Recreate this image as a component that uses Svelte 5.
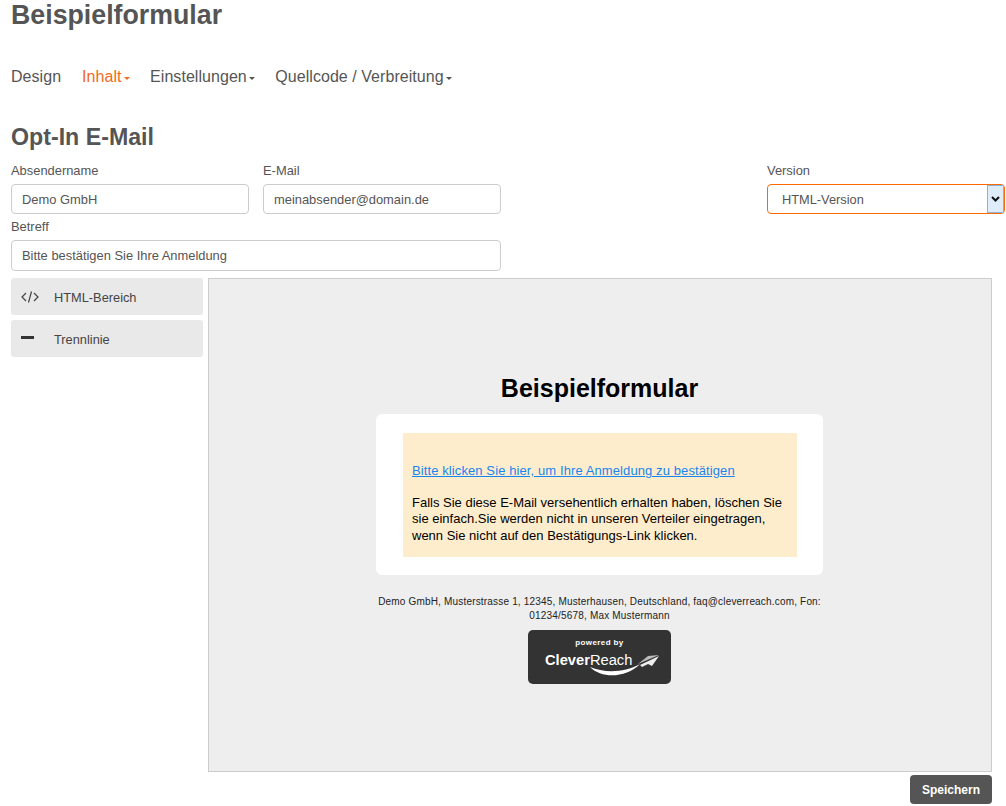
<script>
    const navItems = [
        { label: "Design" },
        { label: "Inhalt", caret: true, active: true },
        { label: "Einstellungen", caret: true },
        { label: "Quellcode / Verbreitung", caret: true }
    ];
</script>

<div class="page">
    <h1>Beispielformular</h1>

    <nav class="nav">
        {#each navItems as item}
            <span class="nav-item" class:active={item.active}>
                {item.label}{#if item.caret}<i class="caret"></i>{/if}
            </span>
        {/each}
    </nav>

    <h2>Opt-In E-Mail</h2>

    <div class="form-row">
        <div class="field">
            <span class="label">Absendername</span>
            <input class="input" value="Demo GmbH" />
        </div>
        <div class="field">
            <span class="label">E-Mail</span>
            <input class="input" value="meinabsender@domain.de" />
        </div>
        <div class="field version">
            <span class="label">Version</span>
            <div class="select">
                <span>HTML-Version</span>
                <span class="select-arrow">
                    <svg width="9" height="6" viewBox="0 0 9 6">
                        <path d="M1 1l3.5 3.5L8 1" fill="none" stroke="#111" stroke-width="2" />
                    </svg>
                </span>
            </div>
        </div>
    </div>

    <div class="field subject">
        <span class="label">Betreff</span>
        <input class="input tall" value="Bitte bestätigen Sie Ihre Anmeldung" />
    </div>

    <div class="editor">
        <aside class="sidebar">
            <div class="tool">
                <svg class="tool-icon" width="18" height="14" viewBox="0 0 18 14">
                    <path d="M5 3L1 7l4 4M13 3l4 4-4 4M10.5 1.5l-3 11" fill="none" stroke="#444" stroke-width="1.2" />
                </svg>
                HTML-Bereich
            </div>
            <div class="tool">
                <svg class="tool-icon" width="18" height="14" viewBox="0 0 18 14">
                    <rect x="0" y="4" width="13" height="3" fill="#333" />
                </svg>
                Trennlinie
            </div>
        </aside>

        <section class="canvas">
            <div class="mail-title">Beispielformular</div>
            <div class="mail-card">
                <div class="mail-body">
                    <a class="mail-link" href="#top">Bitte klicken Sie hier, um Ihre Anmeldung zu bestätigen</a>
                    <p>Falls Sie diese E-Mail versehentlich erhalten haben, löschen Sie sie einfach.Sie werden nicht in unseren Verteiler eingetragen, wenn Sie nicht auf den Bestätigungs-Link klicken.</p>
                </div>
            </div>
            <p class="mail-footer">Demo GmbH, Musterstrasse 1, 12345, Musterhausen, Deutschland, faq@cleverreach.com, Fon: 01234/5678, Max Mustermann</p>
            <div class="badge">
                <span class="badge-top">powered by</span>
                <span class="badge-logo"><b>Clever</b>Reach</span>
                <svg class="badge-mark" width="74" height="26" viewBox="0 0 74 26">
                    <path d="M2 15C16 21 36 21 52 12 38 26 14 27 2 15z" fill="#fff" />
                    <path d="M50 12L60 4l11-1z" fill="#bbb" />
                    <path d="M52 13L71 4l-7 10-4-2-6 3z" fill="#eee" />
                </svg>
            </div>
        </section>
    </div>

    <div class="actions">
        <button class="save">Speichern</button>
    </div>
</div>

<style>
    :global(body) {
        background: #fff;
    }
    .page {
        width: 1006px;
        height: 806px;
        box-sizing: border-box;
        overflow: hidden;
        padding-left: 11px;
        font-family: "Liberation Sans", Arial, sans-serif;
        color: #555;
    }
    h1 {
        margin: 0;
        height: 32px;
        font-size: 26.75px;
        line-height: 31px;
        font-weight: bold;
    }
    .nav {
        display: flex;
        gap: 20.5px;
        margin-top: 34px;
        height: 22px;
        font-size: 16px;
        line-height: 22px;
        letter-spacing: 0.05px;
    }
    .nav-item {
        display: flex;
        align-items: center;
    }
    .nav-item.active {
        color: #f26a21;
        margin-left: 0.5px;
    }
    .caret {
        margin: 2px 0 0 2px;
        border-top: 3px solid currentColor;
        border-left: 3px solid transparent;
        border-right: 3px solid transparent;
    }
    h2 {
        margin: 34px 0 0;
        height: 30px;
        font-size: 23.2px;
        line-height: 30px;
        font-weight: bold;
    }
    .form-row {
        display: flex;
        gap: 14px;
        margin-top: 9px;
    }
    .field {
        display: flex;
        flex-direction: column;
        width: 238px;
    }
    .version {
        margin-left: 252px;
    }
    .label {
        height: 23px;
        font-size: 12.9px;
        line-height: 20px;
    }
    .input {
        box-sizing: border-box;
        width: 100%;
        height: 30px;
        padding: 0 10px;
        border: 1px solid #ccc;
        border-radius: 4px;
        background: #fff;
        color: #555;
        font: 12.9px "Liberation Sans", Arial, sans-serif;
        outline: none;
    }
    .tall {
        height: 31px;
    }
    .subject {
        width: 490px;
        margin-top: 3px;
    }
    .select {
        box-sizing: border-box;
        display: flex;
        align-items: center;
        justify-content: space-between;
        height: 30px;
        padding-left: 14px;
        border: 1px solid #ff6a00;
        border-radius: 4px;
        font-size: 12.8px;
    }
    .select-arrow {
        box-sizing: border-box;
        display: flex;
        align-items: center;
        justify-content: center;
        width: 17px;
        height: 28px;
        border: 1px solid #8fb3d6;
        background: #dfecfa;
    }
    .editor {
        display: flex;
        gap: 5px;
        margin-top: 7px;
    }
    .sidebar {
        display: flex;
        flex-direction: column;
        gap: 5px;
        width: 192px;
    }
    .tool {
        box-sizing: border-box;
        display: flex;
        align-items: center;
        height: 37px;
        padding: 1px 0 0 10px;
        border-radius: 3px;
        background: #e9e9e9;
        font-size: 12.8px;
        color: #444;
    }
    .tool-icon {
        margin-right: 15px;
        flex: none;
    }
    .canvas {
        box-sizing: border-box;
        display: flex;
        flex-direction: column;
        align-items: center;
        width: 784px;
        height: 494px;
        padding: 96px 1px 0 0;
        border: 1px solid #ccc;
        background: #eee;
    }
    .mail-title {
        height: 39px;
        font-size: 25px;
        line-height: 27px;
        font-weight: bold;
        color: #000;
    }
    .mail-card {
        box-sizing: border-box;
        width: 447px;
        height: 161px;
        padding: 19px 26px 18px 27px;
        border-radius: 6px;
        background: #fff;
    }
    .mail-body {
        box-sizing: border-box;
        height: 124px;
        padding: 30px 9px 0;
        background: #feedcd;
        font-size: 13px;
        line-height: 16.6px;
        color: #000;
    }
    .mail-link {
        color: #1a85ee;
        letter-spacing: 0.1px;
    }
    .mail-body p {
        margin: 15px 0 0;
    }
    .mail-footer {
        width: 447px;
        margin: 20px 0 0;
        font-size: 10px;
        line-height: 14px;
        letter-spacing: 0.18px;
        text-align: center;
        color: #222;
    }
    .badge {
        position: relative;
        box-sizing: border-box;
        display: flex;
        flex-direction: column;
        align-items: center;
        width: 143px;
        height: 54px;
        margin-top: 7px;
        border-radius: 5px;
        background: #333;
        color: #fff;
    }
    .badge-top {
        margin-top: 8px;
        font-size: 8px;
        line-height: 10px;
        font-weight: bold;
        letter-spacing: 0.4px;
    }
    .badge-logo {
        align-self: flex-start;
        margin: 2px 0 0 17px;
        font-size: 14.7px;
        line-height: 20px;
    }
    .badge-mark {
        position: absolute;
        left: 60px;
        top: 22px;
    }
    .actions {
        display: flex;
        justify-content: flex-end;
        width: 981px;
        margin-top: 3px;
    }
    .save {
        width: 82px;
        height: 29px;
        border: 0;
        border-radius: 4px;
        background: #555;
        color: #fff;
        font: bold 12px "Liberation Sans", Arial, sans-serif;
    }
</style>
